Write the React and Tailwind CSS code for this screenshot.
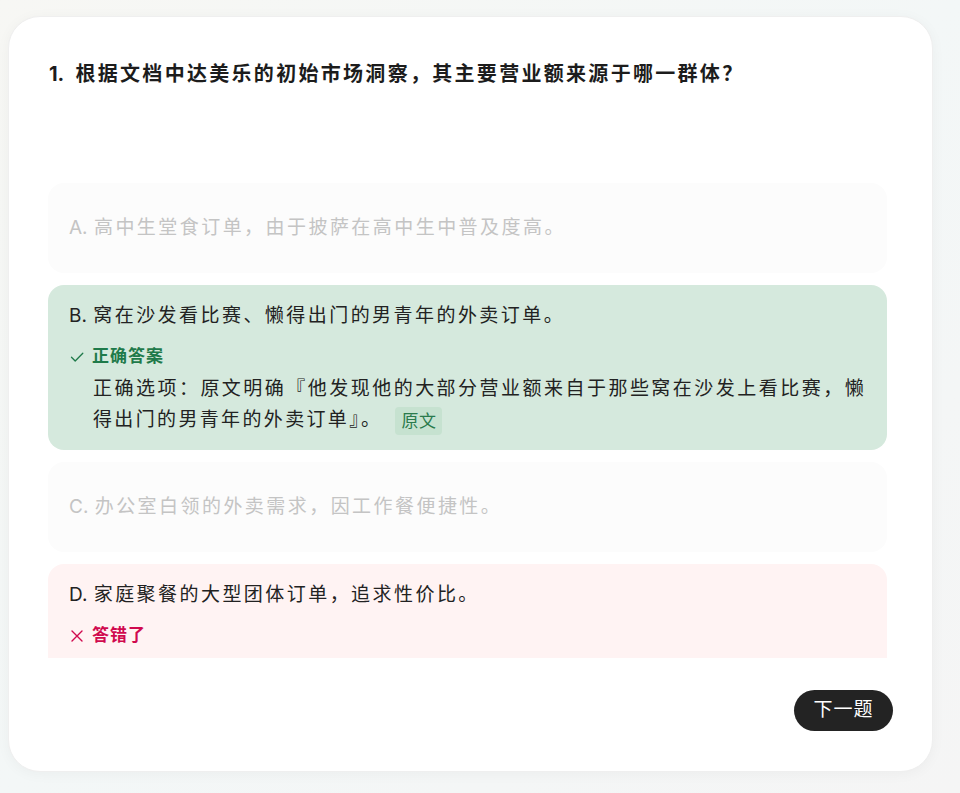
import React from "react";

const font = { fontFamily: 'Inter, "Noto Sans CJK SC", sans-serif' };

function CheckMark() {
  return (
    <svg width="14" height="14" viewBox="0 0 14 14" fill="none" className="ml-[1px]">
      <path d="M1.5 7.2 L5.2 11 L12.8 3.2" stroke="currentColor" strokeWidth="1.3" strokeLinecap="round" strokeLinejoin="round" />
    </svg>
  );
}

function Cross() {
  return (
    <svg width="14" height="14" viewBox="0 0 14 14" fill="none" className="ml-[1px]">
      <path d="M2 2 L12 12 M12 2 L2 12" stroke="currentColor" strokeWidth="1.4" strokeLinecap="round" />
    </svg>
  );
}

function OptionText({ letter, text }) {
  return (
    <div className="text-[19px] leading-[30px]">
      <span className="tracking-normal mr-[1px]">{letter}. </span>
      <span className="tracking-[2.45px]">{text}</span>
    </div>
  );
}

function Faded({ letter, text }) {
  return (
    <div className="flex items-center min-h-[90px] rounded-[16px] bg-[#fcfcfc] px-[21px] text-[#c4c4c4]">
      <OptionText letter={letter} text={text} />
    </div>
  );
}

export default function App() {
  return (
    <div
      className="h-[793px] w-[960px] overflow-hidden bg-gradient-to-br from-[#f7f7f4] via-[#f3f7f7] to-[#f5f5f5] pt-4 pl-2 pr-[27px] pb-[21px]"
      style={font}
    >
      <div className="h-[756px] rounded-[32px] bg-white border border-[#efefef] shadow-[0_2px_14px_rgba(0,0,0,0.04)] flex flex-col px-[39px] pt-[39px] pb-[40px]">
        <h1 className="text-[20px] font-bold leading-[36px] text-[#1c1c1c] pl-[1px]">
          <span className="tracking-normal mr-[7px]">1. </span>
          <span className="tracking-[2.3px]">根据文档中达美乐的初始市场洞察，其主要营业额来源于哪一群体？</span>
        </h1>

        <div className="flex-1 min-h-0 overflow-hidden mt-[91px] pr-[6px] flex flex-col gap-3">
          <Faded letter="A" text="高中生堂食订单，由于披萨在高中生中普及度高。" />

          <div className="shrink-0 rounded-[16px] bg-[#d5e9dd] px-[21px] pt-4 pb-[15px] text-[#222]">
            <OptionText letter="B" text="窝在沙发看比赛、懒得出门的男青年的外卖订单。" />
            <div className="mt-[14px] h-6 flex items-center text-[#1f7a4a]">
              <CheckMark />
              <span className="ml-[8px] text-[17px] font-bold tracking-[1px]">正确答案</span>
            </div>
            <div className="mt-1 pl-6 text-[19px] tracking-[2.35px] leading-[31px] text-[#222]">
              <span className="block [text-align-last:justify]">
                正确选项：原文明确『他发现他的大部分营业额来自于那些窝在沙发上看比赛，懒
              </span>
              <span>得出门的男青年的外卖订单』。</span>
              <span className="ml-[13px] inline-flex items-center h-7 px-[6px] rounded-[4px] bg-[#c6e2d0] text-[#2a7a4c] text-[17px] tracking-[0.5px] leading-7 align-middle">
                原文
              </span>
            </div>
          </div>

          <Faded letter="C" text="办公室白领的外卖需求，因工作餐便捷性。" />

          <div className="shrink-0 rounded-[16px] bg-[#fff3f3] px-[21px] pt-4 pb-[24px] text-[#222]">
            <OptionText letter="D" text="家庭聚餐的大型团体订单，追求性价比。" />
            <div className="mt-[14px] h-6 flex items-center text-[#d0094e]">
              <Cross />
              <span className="ml-[8px] text-[17px] font-bold tracking-[1px]">答错了</span>
            </div>
          </div>
        </div>

        <div className="mt-8 flex justify-end">
          <button className="h-[41px] w-[99px] rounded-full bg-[#232323] text-white text-[19px] tracking-[1px]">
            下一题
          </button>
        </div>
      </div>
    </div>
  );
}
